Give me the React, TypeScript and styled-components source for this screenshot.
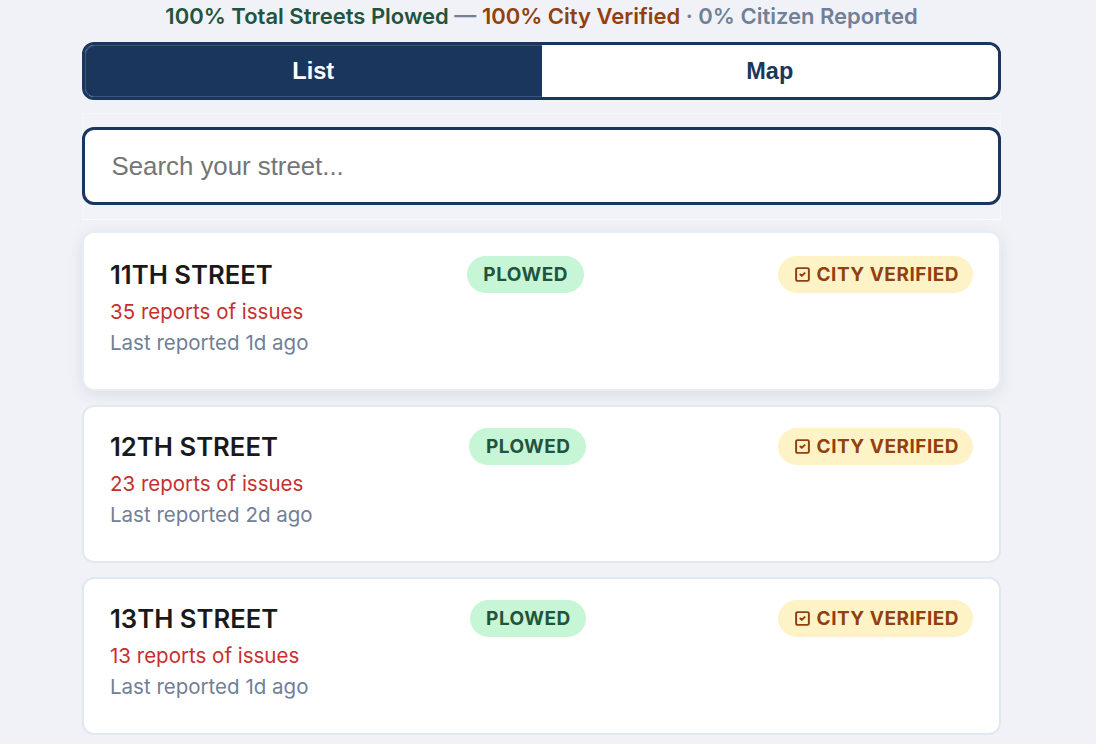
import styled, { createGlobalStyle } from 'styled-components'
import { SquareCheck } from 'lucide-react'

const streets = [
  { name: '11TH STREET', reports: 35, last: '1d', raised: true },
  { name: '12TH STREET', reports: 23, last: '2d', raised: false },
  { name: '13TH STREET', reports: 13, last: '1d', raised: false },
]

export default function App() {
  return (
    <Page>
      <GlobalStyle />
      <Summary>
        <Green>100% Total Streets Plowed</Green> — <Orange>100% City Verified</Orange> ·{' '}
        <span>0% Citizen Reported</span>
      </Summary>

      <Tabs>
        <Tab $active>List</Tab>
        <Tab>Map</Tab>
      </Tabs>

      <SearchPanel>
        <SearchInput placeholder='Search your street...' />
      </SearchPanel>

      <List>
        {streets.map((street) => (
          <Card key={street.name} $raised={street.raised}>
            <Info>
              <StreetName>{street.name}</StreetName>
              <Reports>{street.reports} reports of issues</Reports>
              <LastReported>Last reported {street.last} ago</LastReported>
            </Info>
            <PlowedBadge>PLOWED</PlowedBadge>
            <VerifiedBadge>
              <CheckIcon size={17} strokeWidth={2.8} />
              CITY VERIFIED
            </VerifiedBadge>
          </Card>
        ))}
      </List>
    </Page>
  )
}

const GlobalStyle = createGlobalStyle`
  html, body {
    margin: 0;
    height: 744px;
    overflow: hidden;
    background: #f0f2f7;
  }
`

const Page = styled.div`
  width: 919px;
  margin-left: 82px;
  font-family: Inter, 'Liberation Sans', sans-serif;
`

const Summary = styled.div`
  height: 42px;
  padding-top: 3px;
  box-sizing: border-box;
  text-align: center;
  font-size: 22px;
  line-height: 26px;
  font-weight: 600;
  color: #718096;
  white-space: nowrap;
`

const Green = styled.span`
  color: #22543d;
`

const Orange = styled.span`
  color: #92400e;
`

const Tabs = styled.div`
  display: flex;
  height: 58px;
  box-sizing: border-box;
  border: 3px solid #1a365d;
  border-radius: 12px;
  overflow: hidden;
  background: #fff;
`

const Tab = styled.button<{ $active?: boolean }>`
  flex: 1;
  border: 0;
  padding: 0;
  font-family: 'Liberation Sans', Arial, sans-serif;
  font-size: 23.5px;
  font-weight: 700;
  color: ${(p) => (p.$active ? '#fff' : '#1a365d')};
  background: ${(p) => (p.$active ? '#1a365d' : '#fff')};
  border-radius: ${(p) => (p.$active ? '9px 0 0 9px' : '0')};
  box-shadow: ${(p) =>
    p.$active ? 'inset 1px 1px 0 #3a5480, inset 0 -1px 0 #3a5480' : 'none'};
`

const SearchPanel = styled.div`
  margin-top: 13px;
  padding: 14px 0 15px;
  background: #f1f3f8;
  box-shadow: inset 0 -1px 0 #fafbfd, inset 0 0 0 1px #f5f6fa;
`

const SearchInput = styled.input`
  display: block;
  width: 100%;
  height: 78px;
  box-sizing: border-box;
  padding: 0 26.5px;
  border: 3px solid #1a365d;
  border-radius: 12px;
  outline: none;
  background: #fff;
  font-family: 'Liberation Sans', Arial, sans-serif;
  font-size: 25.8px;

  &::placeholder {
    color: #757575;
  }
`

const List = styled.div`
  display: flex;
  flex-direction: column;
  gap: 14px;
  margin-top: 11px;
`

const Card = styled.div<{ $raised: boolean }>`
  display: flex;
  justify-content: space-between;
  align-items: flex-start;
  height: ${(p) => (p.$raised ? '160px' : '158px')};
  box-sizing: border-box;
  padding: ${(p) => (p.$raised ? '23px' : '21px')} 26px 21px;
  background: #fff;
  border: 2px solid ${(p) => (p.$raised ? '#e8edf4' : '#e2e8f0')};
  border-radius: 12px;
  box-shadow: ${(p) => (p.$raised ? '0 4px 16px rgba(26, 54, 93, 0.1)' : 'none')};
`

/* only the street name sets the column width, the smaller lines run past it */
const Info = styled.div`
  display: flex;
  flex-direction: column;
`

const StreetName = styled.div`
  font-size: 25.7px;
  line-height: 38px;
  font-weight: 600;
  margin-bottom: 2px;
  white-space: nowrap;
  color: #1a1a1a;
`

const Reports = styled.div`
  width: 0;
  white-space: nowrap;
  font-size: 20.5px;
  line-height: 31px;
  color: #c53030;
`

const LastReported = styled(Reports)`
  color: #718096;
`

const Badge = styled.div`
  display: flex;
  align-items: center;
  height: 37px;
  padding: 0 15.5px 0 16.5px;
  border-radius: 19px;
  font-size: 19px;
  font-weight: 700;
  letter-spacing: 0.5px;
`

const PlowedBadge = styled(Badge)`
  background: #c6f6d5;
  color: #22543d;
`

const VerifiedBadge = styled(Badge)`
  gap: 7px;
  padding: 0 14px 0 17px;
  background: #fef3c7;
  color: #92400e;
`

const CheckIcon = styled(SquareCheck)`
  margin: 0 -1px;
`
